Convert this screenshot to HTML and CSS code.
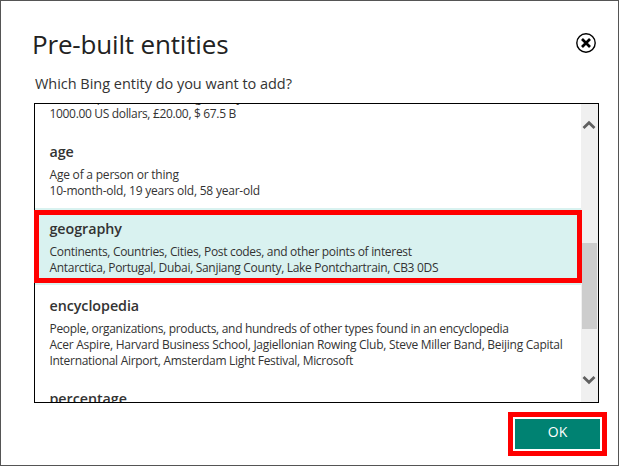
FILE: index.html
```html
<!DOCTYPE html>
<html lang="en">
<head>
<meta charset="utf-8">
<title>Pre-built entities</title>
<link rel="stylesheet" href="styles.css">
</head>
<body>
<main class="dialog">
  <header class="header">
    <h1 class="title">Pre-built entities</h1>
    <button class="close" aria-label="Close">
      <svg width="22" height="22" viewBox="0 0 22 22"><circle cx="11" cy="11" r="9.200" fill="none" stroke="#000" stroke-width="1.400"/><path d="M7 7l8 8M15 7l-8 8" stroke="#000" stroke-width="2.700"/></svg>
    </button>
  </header>
  <p class="question">Which Bing entity do you want to add?</p>
  <section class="list">
    <div class="items">
      <article class="item item-cut">
        <p class="line l-intro">Amount paid or owed using money</p>
        <p class="line l-money">1000.00 US dollars, £20.00, $ 67.5 B</p>
      </article>
      <article class="item">
        <h2 class="name">age</h2>
        <p class="line l-age">Age of a person or thing</p>
        <p class="line l-years">10-month-old, 19 years old, 58 year-old</p>
      </article>
      <article class="item selected">
        <h2 class="name">geography</h2>
        <p class="line">Continents, Countries, Cities, Post codes, and other points of interest</p>
        <p class="line">Antarctica, Portugal, Dubai, Sanjiang County, Lake Pontchartrain, CB3 0DS</p>
      </article>
      <article class="item item-tall">
        <h2 class="name">encyclopedia</h2>
        <p class="line">People, organizations, products, and hundreds of other types found in an encyclopedia</p>
        <p class="line l-acer">Acer Aspire, Harvard Business School, Jagiellonian Rowing Club, Steve Miller Band, Beijing Capital</p>
        <p class="line l-int">International Airport, Amsterdam Light Festival, Microsoft</p>
      </article>
      <article class="item">
        <h2 class="name">percentage</h2>
      </article>
    </div>
    <div class="scrollbar">
      <svg class="arrow" width="14" height="10" viewBox="0 0 14 10"><path d="M1.500 8L7 2.800 12.500 8" fill="none" stroke="#606060" stroke-width="2.800"/></svg>
      <div class="thumb"></div>
      <svg class="arrow" width="14" height="10" viewBox="0 0 14 10"><path d="M1.500 2L7 7.200 12.500 2" fill="none" stroke="#606060" stroke-width="2.800"/></svg>
    </div>
  </section>
  <footer class="footer">
    <div class="ok-mark"><button class="ok">OK</button></div>
  </footer>
  <div class="highlight"></div>
</main>
</body>
</html>
```
FILE: styles.css
```css
* { box-sizing: border-box; margin: 0; padding: 0; }
body { width: 619px; height: 466px; overflow: hidden; background: #fff; font-family: "Open Sans", "Noto Sans", sans-serif; color: #333; }
.dialog { position: relative; width: 619px; height: 466px; border: 1px solid #555; padding: 0 19px 0 33px; }
.header { display: flex; justify-content: space-between; align-items: flex-start; height: 71px; padding-top: 23px; }
.title { font-size: 26px; font-weight: 400; letter-spacing: -0.170px; line-height: 40px; margin-left: -2px; color: #222; white-space: nowrap; }
.close { width: 22px; height: 22px; border: 0; background: none; margin: 8px 2px 0 0; }
.close svg { display: block; }
.question { font-size: 14.500px; letter-spacing: -0.030px; line-height: 24px; height: 31px; margin-left: 1px; white-space: nowrap; }
.list { display: flex; width: 565px; height: 300px; border: 1px solid #000; overflow: hidden; }
.items { flex: 1; min-width: 0; overflow: hidden; }
.item { height: 77px; padding: 11px 0 0 14.500px; }
.item-tall { height: 93px; }
.item-cut { margin-top: -50px; padding-top: 35px; }
.selected { background: #d9f2f0; }
.name { font-size: 14.300px; font-weight: 600; letter-spacing: -0.050px; line-height: 20px; height: 25px; }
.line { font-size: 12px; letter-spacing: -0.310px; line-height: 16px; white-space: nowrap; }
.l-intro { line-height: 17px; height: 17px; letter-spacing: -0.100px; }
.l-money { letter-spacing: -0.330px; }
.l-age { letter-spacing: -0.210px; }
.l-years { letter-spacing: -0.220px; }
.l-acer { letter-spacing: -0.265px; }
.l-int { letter-spacing: -0.300px; }
.scrollbar { width: 17px; background: #f0f0f0; padding: 16px 1px; display: flex; flex-direction: column; }
.arrow { display: block; flex: none; }
.thumb { height: 86px; margin: 113px 0 46px; background: #cdcdcd; flex: none; }
.footer { display: flex; justify-content: flex-end; padding-top: 9px; margin-right: -8px; }
.ok-mark { width: 99px; height: 44px; border: 5px solid #f00; padding: 2px; }
.ok { display: block; width: 85px; height: 30px; border: 0; padding-bottom: 4px; background: #008272; color: #fff; font: 14px/26px "Open Sans", sans-serif; }
.highlight { position: absolute; left: 33px; top: 209px; width: 548px; height: 73px; border: 5px solid #f00; }
```
